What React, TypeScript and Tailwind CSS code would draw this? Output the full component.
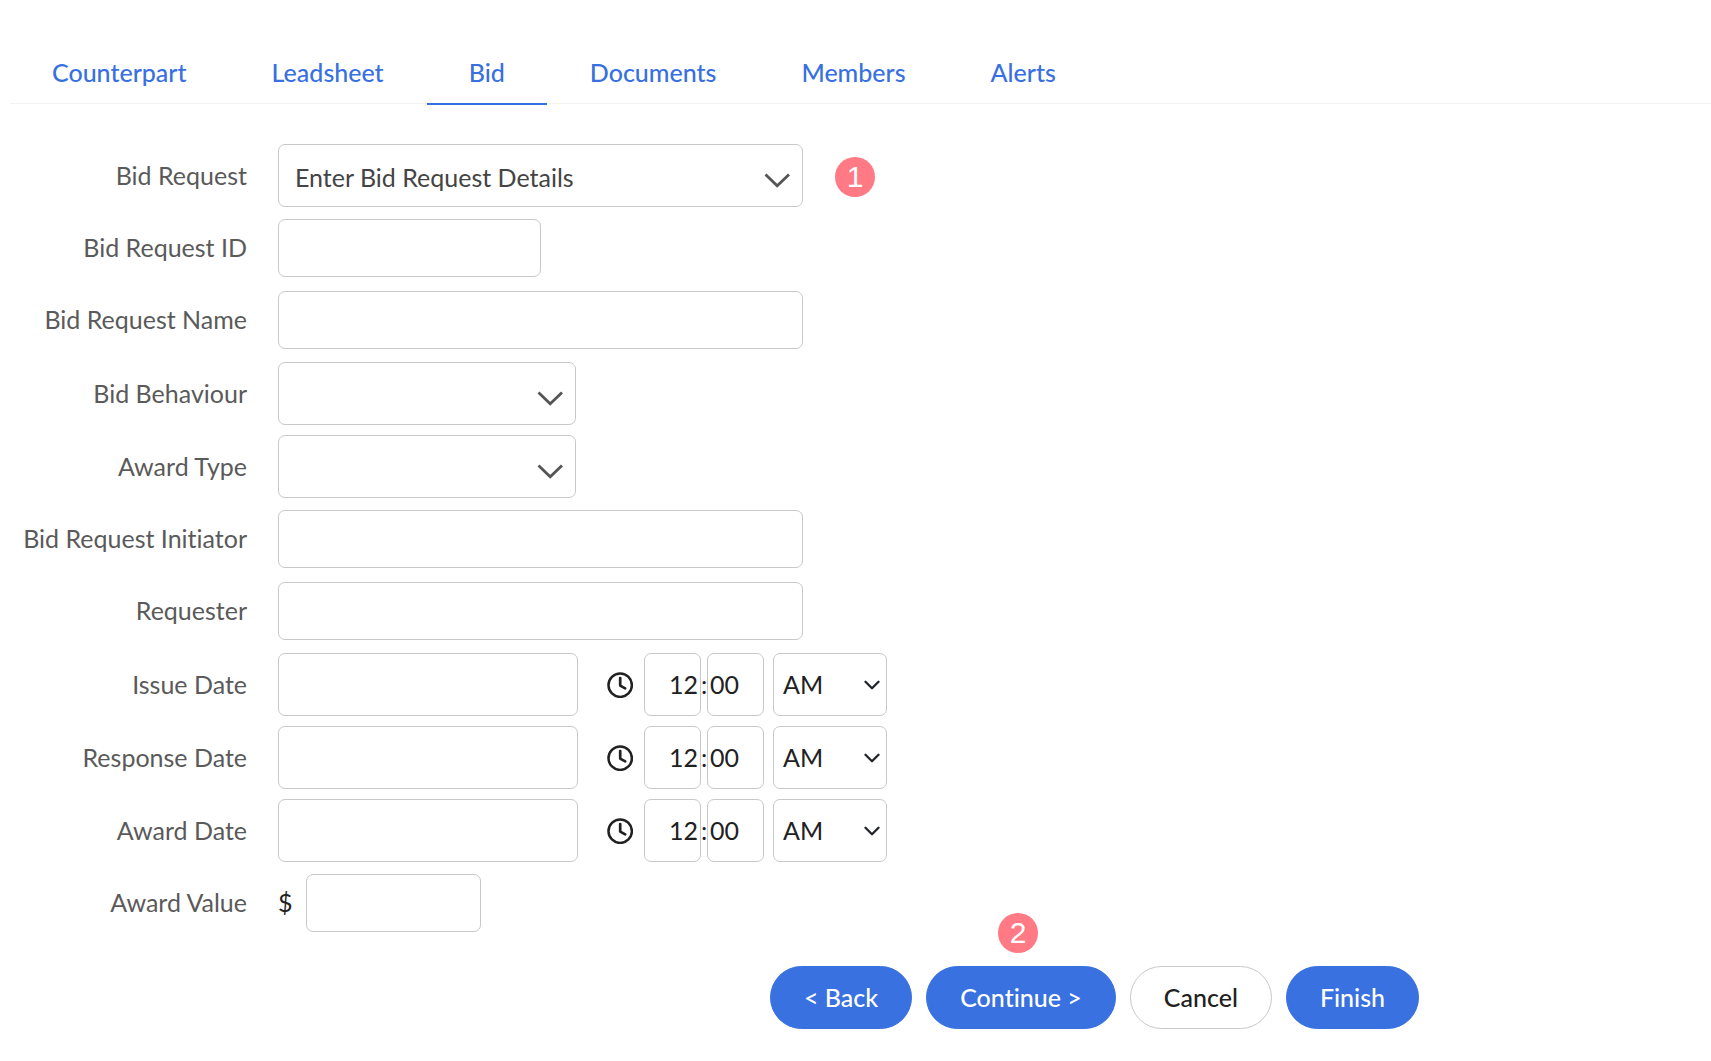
import { ReactNode, useState } from "react";
import clsx from "clsx";

const tabs = ["Counterpart", "Leadsheet", "Bid", "Documents", "Members", "Alerts"];

const field =
  "appearance-none rounded-[7px] border border-[#c8c8c8] bg-white outline-none focus:border-[#3870e0]";

const Chevron = () => (
  <svg
    className="pointer-events-none absolute right-3 top-[29px] h-[15px] w-[27px]"
    viewBox="0 0 27 15"
    fill="none"
    stroke="#555"
    strokeWidth="2.8"
  >
    <path d="M1.5 1.5 13.2 12.8 25 1.5" />
  </svg>
);

const SmallChevron = () => (
  <svg
    className="pointer-events-none absolute right-[7px] top-[27px] h-[11px] w-4"
    viewBox="0 0 16 11"
    fill="none"
    stroke="#212529"
    strokeWidth="2.3"
    strokeLinecap="round"
    strokeLinejoin="round"
  >
    <path d="M1.5 1.8 8 8.3 14.5 1.8" />
  </svg>
);

const Clock = () => (
  <svg
    className="ml-[29px] mr-[11px] h-[26px] w-[26px] shrink-0"
    viewBox="0 0 26 26"
    fill="none"
    stroke="#212121"
    strokeLinecap="round"
    strokeLinejoin="round"
  >
    <circle cx="13.2" cy="13.2" r="11.7" strokeWidth="2.5" />
    <path d="M13.2 6V13.6L18.2 16.4" strokeWidth="2.7" />
  </svg>
);

const Badge = ({ children }: { children: ReactNode }) => (
  <span className="flex h-10 w-10 items-center justify-center rounded-full bg-[#ff7a84] font-['Liberation_Sans',sans-serif] text-[30px] leading-none font-normal text-white">
    {children}
  </span>
);

type RowProps = { label: string; id: string; tall?: boolean; children: ReactNode };

const Row = ({ label, id, tall, children }: RowProps) => (
  <div className={clsx("flex items-center", tall ? "h-[73px]" : "h-[72px]")}>
    <label htmlFor={id} className="mr-[31px] w-[247px] shrink-0 pb-0.5 text-right text-[#5a5a5a]">
      {label}
    </label>
    {children}
  </div>
);

type SelectProps = { id: string; wide?: boolean; option?: string };

const Select = ({ id, wide, option = "" }: SelectProps) => (
  <div className={clsx("relative", wide ? "w-[525px]" : "w-[298px]")}>
    <select id={id} className={clsx(field, "h-[63px] w-full pt-0.5 pr-12 pl-4 text-[#444]")}>
      <option>{option}</option>
    </select>
    <Chevron />
  </div>
);

const DateRow = ({ label, id }: { label: string; id: string }) => (
  <Row label={label} id={id} tall>
    <input id={id} type="text" className={clsx(field, "h-[63px] w-[300px] px-4")} />
    <Clock />
    <input
      type="text"
      aria-label={`${label} hour`}
      defaultValue="12"
      className={clsx(field, "h-[63px] w-[57px] pr-0.5 pb-0.5 text-right")}
    />
    <span className="flex w-[6px] justify-center pb-0.5">:</span>
    <input
      type="text"
      aria-label={`${label} minutes`}
      defaultValue="00"
      className={clsx(field, "h-[63px] w-[57px] pb-0.5 pl-0.5")}
    />
    <div className="relative ml-[9px] w-[114px]">
      <select aria-label={`${label} AM or PM`} className={clsx(field, "h-[63px] w-full pb-0.5 pl-[9px]")}>
        <option>AM</option>
        <option>PM</option>
      </select>
      <SmallChevron />
    </div>
  </Row>
);

const primary = "bg-[#3971e0] border-[#3971e0] text-white hover:bg-[#2d61c8]";
const button = "h-[63px] rounded-full border px-[33px] pb-0.5 font-medium cursor-pointer";

const App = () => {
  const [active, setActive] = useState("Bid");

  return (
    <main className="min-h-screen w-full bg-white pt-[54px] pb-8 font-[Lato,sans-serif] text-[25px] leading-9 text-[#212121] [font-variant-ligatures:none]">
      <nav className="ml-[10px] flex gap-px border-b border-[#f2f2f2]">
        {tabs.map((tab) => (
          <a
            key={tab}
            href="#"
            onClick={() => setActive(tab)}
            className={clsx(
              "-mb-[2px] border-b-2 px-[42px] pb-[13px] font-medium text-[#3870e0]",
              tab === active ? "border-[#3870e0]" : "border-transparent"
            )}
          >
            {tab}
          </a>
        ))}
      </nav>

      <form className="max-w-[1419px] pt-[35px]" onSubmit={(e) => e.preventDefault()}>
        <div className="flex flex-col gap-px">
          {/* Request */}
          <div>
            <Row label="Bid Request" id="bid-request" tall>
              <Select id="bid-request" wide option="Enter Bid Request Details" />
              <div className="ml-8 pt-0.5">
                <Badge>1</Badge>
              </div>
            </Row>
            <Row label="Bid Request ID" id="bid-id">
              <input id="bid-id" type="text" className={clsx(field, "h-[58px] w-[263px] px-4")} />
            </Row>
            <Row label="Bid Request Name" id="bid-name">
              <input id="bid-name" type="text" className={clsx(field, "h-[58px] w-[525px] px-4")} />
            </Row>
          </div>

          {/* Behaviour and people */}
          <div>
            <Row label="Bid Behaviour" id="behaviour" tall>
              <Select id="behaviour" />
            </Row>
            <Row label="Award Type" id="award-type" tall>
              <Select id="award-type" />
            </Row>
            <Row label="Bid Request Initiator" id="initiator">
              <input id="initiator" type="text" className={clsx(field, "h-[58px] w-[525px] px-4")} />
            </Row>
            <Row label="Requester" id="requester">
              <input id="requester" type="text" className={clsx(field, "h-[58px] w-[525px] px-4")} />
            </Row>
          </div>

          {/* Dates and value */}
          <div>
            <DateRow label="Issue Date" id="issue-date" />
            <DateRow label="Response Date" id="response-date" />
            <DateRow label="Award Date" id="award-date" />
            <Row label="Award Value" id="award-value">
              <span className="w-7 pb-0.5">$</span>
              <input id="award-value" type="text" className={clsx(field, "h-[58px] w-[175px] px-4")} />
            </Row>
          </div>
        </div>

        <div className="flex justify-end gap-[14px] pt-[27px]">
          <button type="button" className={clsx(button, primary)}>
            &lt; Back
          </button>
          <div className="relative">
            <button type="submit" className={clsx(button, primary)}>
              Continue &gt;
            </button>
            <div className="absolute inset-x-0 -top-[53px] mr-1.5 flex justify-center">
              <Badge>2</Badge>
            </div>
          </div>
          <button type="button" className={clsx(button, "border-[#c8c8c8] bg-white hover:bg-gray-50")}>
            Cancel
          </button>
          <button type="button" className={clsx(button, primary)}>
            Finish
          </button>
        </div>
      </form>
    </main>
  );
};

export default App;
